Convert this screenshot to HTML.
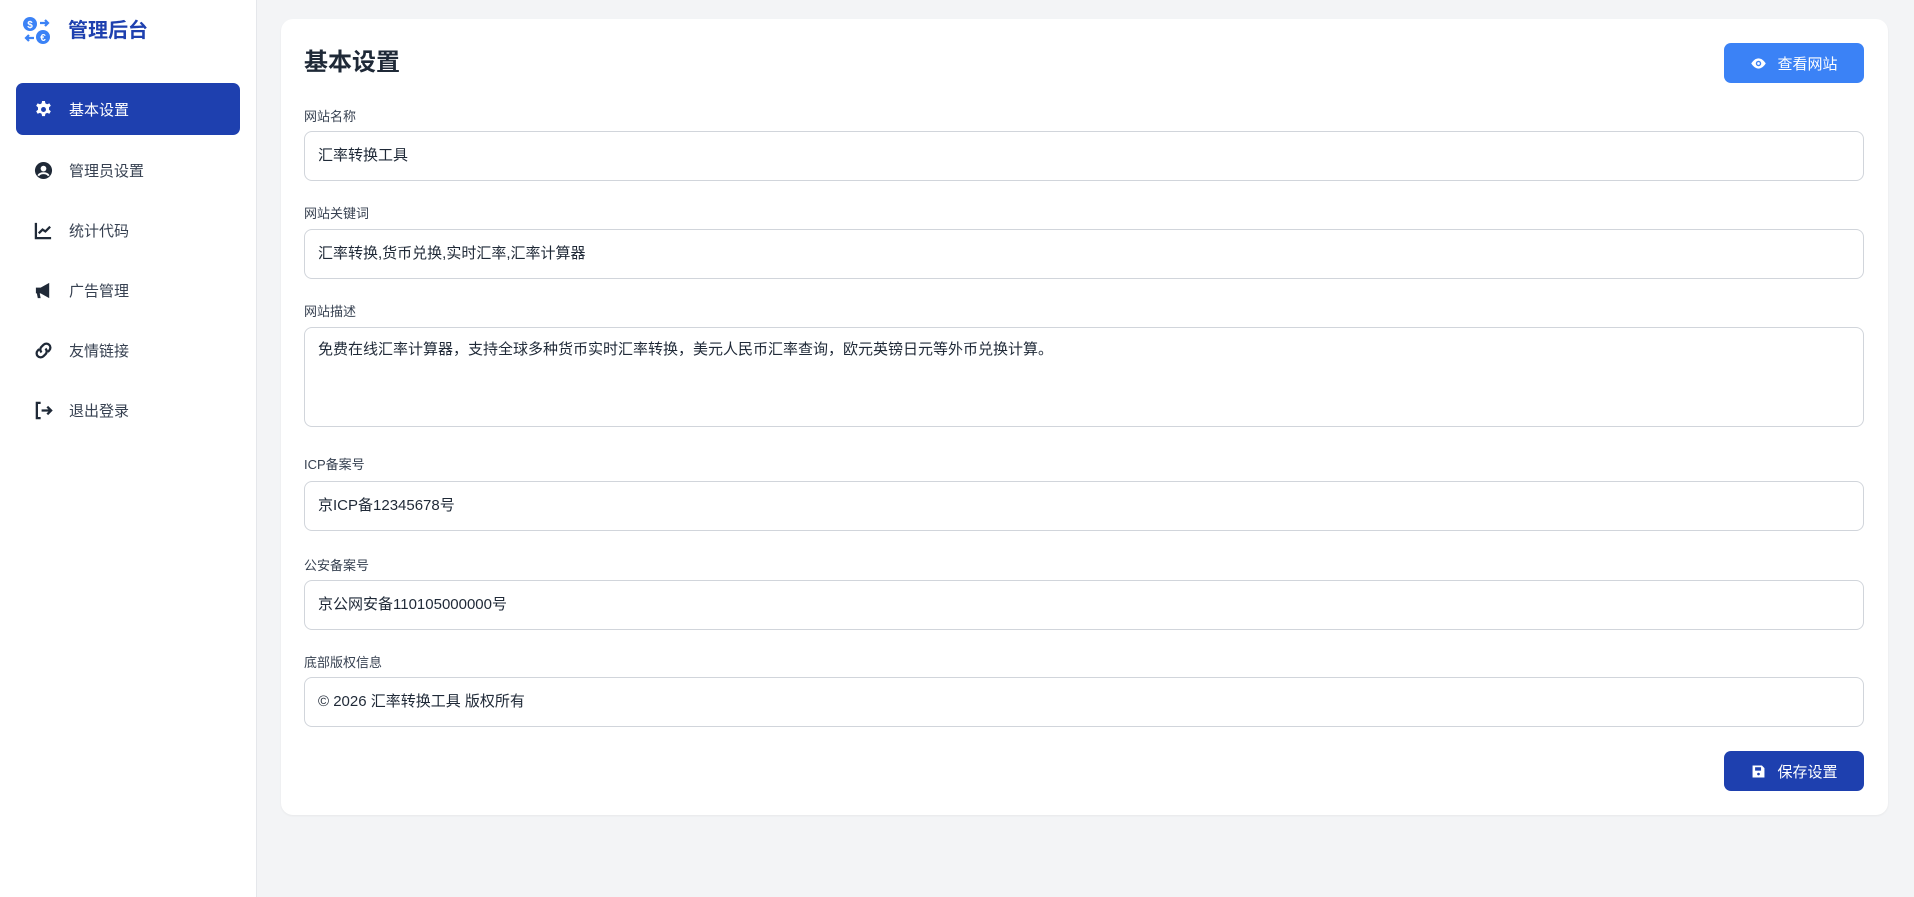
<!DOCTYPE html>
<html><head><meta charset="utf-8"><style>
*{box-sizing:border-box;margin:0;padding:0}
body{width:1914px;height:897px;background:#f3f4f6;font-family:"Liberation Sans","Noto Sans CJK SC",sans-serif;position:relative;overflow:hidden;color:#1f2937}
.side{position:absolute;left:0;top:0;width:257px;height:897px;background:#fff;border-right:1px solid #e5e7eb}
.logo{position:absolute;left:22px;top:16px;width:30px;height:30px}
.brand{position:absolute;left:68px;top:17px;font-size:20px;font-weight:bold;color:#1e40af;line-height:28px}
.nav{position:absolute;left:16px;width:224px;height:52px;border-radius:7px;display:flex;align-items:center;padding-left:18px;font-size:15px;color:#374151}
.nav svg{width:19px;height:19px;margin-right:16px}
.nav.act{background:#1e40af;color:#fff}
.card{position:absolute;left:281px;top:19px;width:1607px;height:796px;background:#fff;border-radius:12px;box-shadow:0 1px 2px rgba(0,0,0,.05)}
h1{position:absolute;left:304px;top:47px;font-size:24px;font-weight:bold;color:#1f2937;line-height:32px}
.btn{position:absolute;left:1724px;width:140px;height:40px;border-radius:7px;color:#fff;font-size:15px;display:flex;align-items:center;justify-content:center}
.btn svg{width:17px;height:17px;margin-right:10px}
.lbl{position:absolute;left:304px;font-size:13px;color:#374151;line-height:18px}
.inp{position:absolute;left:304px;width:1560px;height:50px;border:1px solid #d1d5db;border-radius:8px;font-size:15px;color:#1f2937;padding:0 13px;line-height:48px}
</style></head><body>
<div class="side">
<svg class="logo" viewBox="0 0 30 30"><circle cx="8" cy="8" r="7" fill="#3b82f6"/><text x="8" y="12" font-size="10" fill="#fff" text-anchor="middle" font-family="Liberation Sans" font-weight="bold">$</text><circle cx="21" cy="21" r="7" fill="#3b82f6"/><text x="21" y="25" font-size="10" fill="#fff" text-anchor="middle" font-family="Liberation Sans" font-weight="bold">€</text><path d="M18 7h8M23 4l3 3-3 3M12 22H4M7 19l-3 3 3 3" stroke="#3b82f6" stroke-width="2.2" fill="none"/></svg>
<div class="brand">管理后台</div>
<div class="nav act" style="top:83px"><svg viewBox="0 0 20 20"><path fill="#fff" d="M8.5 1h3l.5 2.5 1.8 1 2.4-1 1.5 2.6-1.9 1.7v2.4l1.9 1.7-1.5 2.6-2.4-1-1.8 1-.5 2.5h-3l-.5-2.5-1.8-1-2.4 1-1.5-2.6 1.9-1.7V7.8L2.3 6.1l1.5-2.6 2.4 1 1.8-1z"/><circle cx="10" cy="10" r="2.6" fill="#1e40af"/></svg>基本设置</div>
<div class="nav" style="top:144px"><svg viewBox="0 0 20 20"><circle cx="10" cy="10" r="9" fill="#1f2937"/><circle cx="10" cy="8" r="3" fill="#fff"/><path d="M4.5 15.5c2-3.5 9-3.5 11 0" stroke="#fff" stroke-width="2" fill="none"/></svg>管理员设置</div>
<div class="nav" style="top:204px"><svg viewBox="0 0 20 20"><path d="M2 2v16h16M5 13l4-4 3 2 5-5" stroke="#1f2937" stroke-width="2.4" fill="none"/></svg>统计代码</div>
<div class="nav" style="top:264px"><svg viewBox="0 0 20 20"><path fill="#1f2937" d="M2 7h5l9-5v16l-9-5H6l1 5H4l-1-5H2z"/></svg>广告管理</div>
<div class="nav" style="top:324px"><svg viewBox="0 0 20 20"><path d="M8 12a4 4 0 0 1 0-6l2-2a4 4 0 0 1 6 6l-1.5 1.5M12 8a4 4 0 0 1 0 6l-2 2a4 4 0 0 1-6-6l1.5-1.5" stroke="#1f2937" stroke-width="2.4" fill="none"/></svg>友情链接</div>
<div class="nav" style="top:384px"><svg viewBox="0 0 20 20"><path d="M7 2H3v16h4M8 10h10M14 6l4 4-4 4" stroke="#1f2937" stroke-width="2.4" fill="none"/></svg>退出登录</div>
</div>
<div class="card"></div>
<h1>基本设置</h1>
<div class="btn" style="top:43px;background:#3b82f6"><svg viewBox="0 0 20 20"><path fill="#fff" d="M10 4C5 4 1.5 10 1.5 10S5 16 10 16s8.5-6 8.5-6S15 4 10 4z"/><circle cx="10" cy="10" r="3.2" fill="#3b82f6"/><circle cx="10" cy="10" r="1.6" fill="#fff"/></svg>查看网站</div>
<div class="lbl" style="top:108px">网站名称</div>
<div class="inp" style="top:131px">汇率转换工具</div>
<div class="lbl" style="top:205px">网站关键词</div>
<div class="inp" style="top:229px">汇率转换,货币兑换,实时汇率,汇率计算器</div>
<div class="lbl" style="top:303px">网站描述</div>
<div class="inp" style="top:327px;height:100px;line-height:22px;padding-top:11px">免费在线汇率计算器，支持全球多种货币实时汇率转换，美元人民币汇率查询，欧元英镑日元等外币兑换计算。</div>
<div class="lbl" style="top:456px">ICP备案号</div>
<div class="inp" style="top:481px">京ICP备12345678号</div>
<div class="lbl" style="top:557px">公安备案号</div>
<div class="inp" style="top:580px">京公网安备110105000000号</div>
<div class="lbl" style="top:654px">底部版权信息</div>
<div class="inp" style="top:677px">© 2026 汇率转换工具 版权所有</div>
<div class="btn" style="top:751px;background:#1e40af"><svg viewBox="0 0 20 20"><path fill="#fff" d="M3 3h11l3 3v11H3z"/><rect x="6" y="5" width="7" height="4" fill="#1e40af"/><circle cx="10" cy="13" r="1.6" fill="#1e40af"/></svg>保存设置</div>
</body></html>
